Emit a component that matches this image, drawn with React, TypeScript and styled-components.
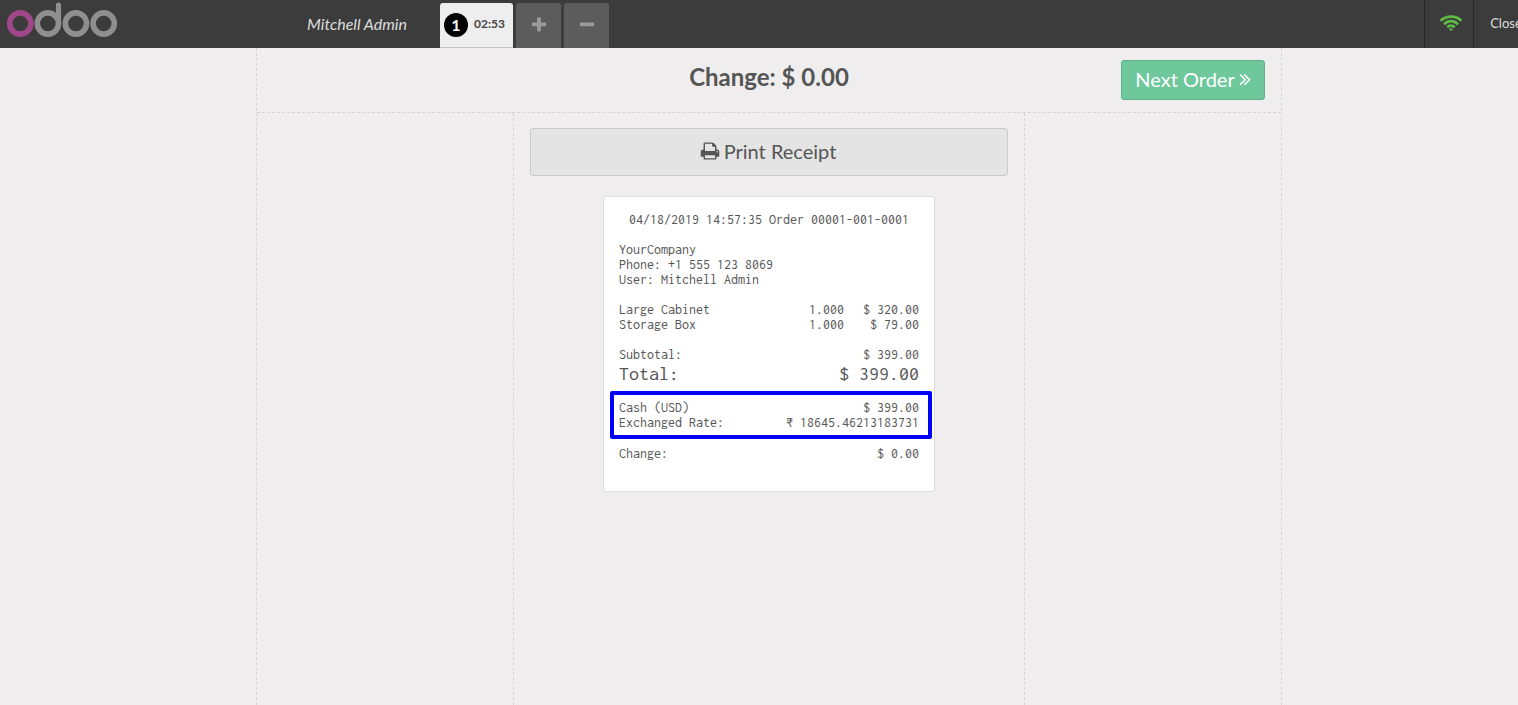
import React from "react";
import styled, { createGlobalStyle, css } from "styled-components";

const GlobalStyle = createGlobalStyle`
  *, *::before, *::after { box-sizing: border-box; }
  html, body, #root { height: 100%; }
  body {
    margin: 0;
    overflow: hidden;
    background: #efedee;
    color: #555555;
    font-family: Lato, "Open Sans", sans-serif;
    font-size: 16px;
  }
  button { font-family: inherit; cursor: pointer; }
`;

/* The register is wider than the window, so the end of the top bar runs off screen. */
const Register = styled.div`
  display: flex;
  flex-direction: column;
  width: calc(100% + 20px);
  height: 100%;
`;

const TopBar = styled.header`
  display: flex;
  flex: none;
  height: 48px;
  background: #3c3c3c;
  color: #dddddd;
`;

const Branding = styled.div`
  display: flex;
  justify-content: space-between;
  width: 440px;
  padding-right: 33px;
  line-height: 48px;
`;

const LogoLink = styled.a`
  display: block;
  height: 48px;
`;

const UserName = styled.span`
  font-style: italic;
`;

const Orders = styled.nav`
  display: flex;
  flex: 1;
  align-items: flex-end;
  gap: 3px;
`;

const tabShape = css`
  display: flex;
  align-items: center;
  height: 45px;
  padding: 0 0 2px;
  border: 0;
  border-radius: 3px 3px 0 0;
`;

const OrderTab = styled.button`
  ${tabShape}
  gap: 6px;
  width: 73px;
  padding: 0 0 0 4px;
  border-bottom: 1px solid #c5c5c5;
  background: #eeeeee;
  color: #444444;
  font-size: 12px;
  font-weight: 700;
`;

const OrderNumber = styled.span`
  width: 24px;
  height: 24px;
  border-radius: 50%;
  background: #000000;
  color: #ffffff;
  font-size: 16px;
  line-height: 24px;
  text-align: center;
`;

const OrderTime = styled.span`
  padding-bottom: 3px;
`;

const OrderAction = styled.button`
  ${tabShape}
  justify-content: center;
  width: 45px;
  background: #5c5c5c;
  color: #9a9a9a;
`;

const BarItem = styled.button<{ $width: number }>`
  display: flex;
  align-items: center;
  justify-content: center;
  width: ${(p) => p.$width}px;
  padding: 0 0 2px;
  border: 0;
  border-left: 1px solid #292929;
  background: none;
  color: #dddddd;
  font-size: 13px;
`;

const Screen = styled.main`
  display: flex;
  flex: 1;
  flex-direction: column;
  width: 100%;
  max-width: 1026px;
  margin: 0 auto;
  border: 1px dashed #d6d4d5;
  border-width: 0 1px;
`;

const ScreenHeader = styled.div`
  display: grid;
  grid-template-columns: 1fr auto 1fr;
  align-items: start;
  height: 65px;
  padding: 12px 16px 0;
  border-bottom: 1px dashed #d6d4d5;
`;

const Title = styled.h1`
  grid-column: 2;
  margin: 0;
  font-size: 24px;
  font-weight: 700;
  line-height: 34px;
`;

const NextButton = styled.button`
  display: flex;
  align-items: center;
  justify-content: center;
  justify-self: end;
  gap: 4px;
  width: 144px;
  height: 40px;
  padding: 0 0 2px;
  border: 1px solid #64af8a;
  border-radius: 3px;
  background: #6ec89b;
  color: #ffffff;
  font-size: 20px;
`;

const Columns = styled.div`
  display: grid;
  flex: 1;
  grid-template-columns: 1fr 2fr 1fr;
`;

const CenterColumn = styled.section`
  grid-column: 2;
  padding: 15px 16px;
  border: 1px dashed #d6d4d5;
  border-width: 0 1px;
`;

const PrintButton = styled.button`
  display: flex;
  align-items: center;
  justify-content: center;
  gap: 4px;
  width: 100%;
  height: 48px;
  padding: 0 2px 2px 0;
  border: 1px solid #cbcbcb;
  border-radius: 3px;
  background: #e4e4e4;
  color: #555555;
  font-size: 20px;
`;

const Receipt = styled.article`
  display: flex;
  flex-direction: column;
  gap: 15px;
  width: 332px;
  margin: 20px auto 0;
  padding: 15px 15px 30px;
  border: 1px solid #dcdcdc;
  border-radius: 3px;
  background: #ffffff;
  font-family: Inconsolata, "DejaVu Sans Mono", monospace;
  font-size: 14px;
  line-height: 15px;
`;

const OrderLine = styled.div`
  text-align: center;
  white-space: nowrap;
`;

const Table = styled.table`
  width: 100%;
  border-collapse: collapse;
  table-layout: fixed;
`;

const Label = styled.th`
  width: 50%;
  padding: 0;
  font-weight: 400;
  text-align: left;
  vertical-align: top;
  white-space: nowrap;
`;

const Value = styled.td`
  padding: 0;
  text-align: right;
  white-space: nowrap;
`;

const TotalRow = styled.tr`
  font-size: 20px;
  line-height: 23px;
`;

const RateValue = styled(Value)`
  line-height: 16px;
`;

const Highlight = styled.div`
  position: relative;

  &::after {
    content: "";
    position: absolute;
    inset: -9px -13px -8px -9px;
    border: 4px solid #0000ff;
    border-radius: 2px;
    pointer-events: none;
  }
`;

const Glyph = ({ d, size, box = "0 0 1792 1792", width }: { d: string; size: number; box?: string; width?: number }) => (
  <svg width={width ?? size} height={size} viewBox={box} fill="currentColor" aria-hidden="true">
    <path d={d} />
  </svg>
);

const PLUS =
  "M1600 736v192q0 40-28 68t-68 28h-416v416q0 40-28 68t-68 28H800q-40 0-68-28t-28-68v-416H288q-40 0-68-28t-28-68V736q0-40 28-68t68-28h416V224q0-40 28-68t68-28h192q40 0 68 28t28 68v416h416q40 0 68 28t28 68z";
const MINUS =
  "M1600 736v192q0 40-28 68t-68 28H288q-40 0-68-28t-28-68V736q0-40 28-68t68-28h1216q40 0 68 28t28 68z";
const PRINT =
  "M448 1536h896v-256H448v256zm0-640h896V512h-160q-40 0-68-28t-28-68V256H448v640zm1152 64q0-26-19-45t-45-19-45 19-19 45 19 45 45 19 45-19 19-45zm128 0v416q0 13-9.500 22.500t-22.500 9.500h-224v160q0 40-28 68t-68 28H416q-40 0-68-28t-28-68v-160H96q-13 0-22.500-9.500T64 1376V960q0-79 56.500-135.500T256 768h64V224q0-40 28-68t68-28h672q40 0 88 20t76 48l152 152q28 28 48 76t20 88v256h64q79 0 135.500 56.500T1728 960z";
const DOUBLE_RIGHT =
  "M979 960q0 13-10 23l-466 466q-10 10-23 10t-23-10l-50-50q-10-10-10-23t10-23l393-393-393-393q-10-10-10-23t10-23l50-50q10-10 23-10t23 10l466 466q10 10 10 23zm384 0q0 13-10 23l-466 466q-10 10-23 10t-23-10l-50-50q-10-10-10-23t10-23l393-393-393-393q-10-10-10-23t10-23l50-50q10-10 23-10t23 10l466 466q10 10 10 23z";

const Logo = () => (
  <svg width="124" height="48" viewBox="0 0 124 48" fill="none" strokeWidth="5.6" role="img" aria-label="odoo">
    <circle cx="20.300" cy="23.500" r="10.600" stroke="#9f4789" />
    <g stroke="#8f8f8f">
      <circle cx="47.900" cy="23.500" r="10.600" />
      <path d="M58.500 23.500V5" strokeLinecap="round" strokeWidth="5.200" />
      <circle cx="75.900" cy="23.500" r="10.600" />
      <circle cx="103.700" cy="23.500" r="10.600" />
    </g>
  </svg>
);

const Wifi = () => (
  <svg width="26" height="16" viewBox="-4 0 26 16" fill="none" stroke="#5fb946" strokeWidth="2.7" aria-hidden="true">
    <path d="M0.500 5.800Q4.700 1.600 11 1.600T21.500 5.800" />
    <path d="M4 9.200Q7 6.200 11 6.200T18 9.200" />
    <path d="M7.300 12.300Q8.900 10.700 11 10.700T14.700 12.300" />
    <path d="M8.900 14Q11 12.300 13.100 14L11 16Z" fill="#5fb946" stroke="none" />
  </svg>
);

const items = [
  { name: "Large Cabinet", quantity: "1.000", price: "$ 320.00" },
  { name: "Storage Box", quantity: "1.000", price: "$ 79.00" },
];

export default function App() {
  return (
    <>
      <GlobalStyle />
      <Register>
        <TopBar>
          <Branding>
            <LogoLink href="#">
              <Logo />
            </LogoLink>
            <UserName>Mitchell Admin</UserName>
          </Branding>
          <Orders aria-label="Orders">
            <OrderTab type="button">
              <OrderNumber>1</OrderNumber>
              <OrderTime>02:53</OrderTime>
            </OrderTab>
            <OrderAction type="button" aria-label="New order">
              <Glyph d={PLUS} size={18} />
            </OrderAction>
            <OrderAction type="button" aria-label="Delete order">
              <Glyph d={MINUS} size={18} />
            </OrderAction>
          </Orders>
          <BarItem type="button" $width={49} aria-label="Connection status">
            <Wifi />
          </BarItem>
          <BarItem type="button" $width={65}>
            Close
          </BarItem>
        </TopBar>
        <Screen>
          <ScreenHeader>
            <Title>Change: $ 0.00</Title>
            <NextButton type="button">
              Next Order
              <Glyph d={DOUBLE_RIGHT} size={20} width={12} box="370 0 1020 1792" />
            </NextButton>
          </ScreenHeader>
          <Columns>
            <CenterColumn>
              <PrintButton type="button">
                <Glyph d={PRINT} size={20} />
                Print Receipt
              </PrintButton>
              <Receipt>
                <OrderLine>04/18/2019 14:57:35 Order 00001-001-0001</OrderLine>
                <div>
                  <div>YourCompany</div>
                  <div>Phone: +1 555 123 8069</div>
                  <div>User: Mitchell Admin</div>
                </div>
                <Table>
                  <tbody>
                    {items.map((item) => (
                      <tr key={item.name}>
                        <Label scope="row">{item.name}</Label>
                        <Value>{item.quantity}</Value>
                        <Value>{item.price}</Value>
                      </tr>
                    ))}
                  </tbody>
                </Table>
                <Table>
                  <tbody>
                    <tr>
                      <Label scope="row">Subtotal:</Label>
                      <Value>$ 399.00</Value>
                    </tr>
                    <TotalRow>
                      <Label scope="row">Total:</Label>
                      <Value>$ 399.00</Value>
                    </TotalRow>
                  </tbody>
                </Table>
                <Highlight>
                  <Table>
                    <tbody>
                      <tr>
                        <Label scope="row">Cash (USD)</Label>
                        <Value>$ 399.00</Value>
                      </tr>
                      <tr>
                        <Label scope="row">Exchanged Rate:</Label>
                        <RateValue>₹ 18645.46213183731</RateValue>
                      </tr>
                    </tbody>
                  </Table>
                </Highlight>
                <Table>
                  <tbody>
                    <tr>
                      <Label scope="row">Change:</Label>
                      <Value>$ 0.00</Value>
                    </tr>
                  </tbody>
                </Table>
              </Receipt>
            </CenterColumn>
          </Columns>
        </Screen>
      </Register>
    </>
  );
}
